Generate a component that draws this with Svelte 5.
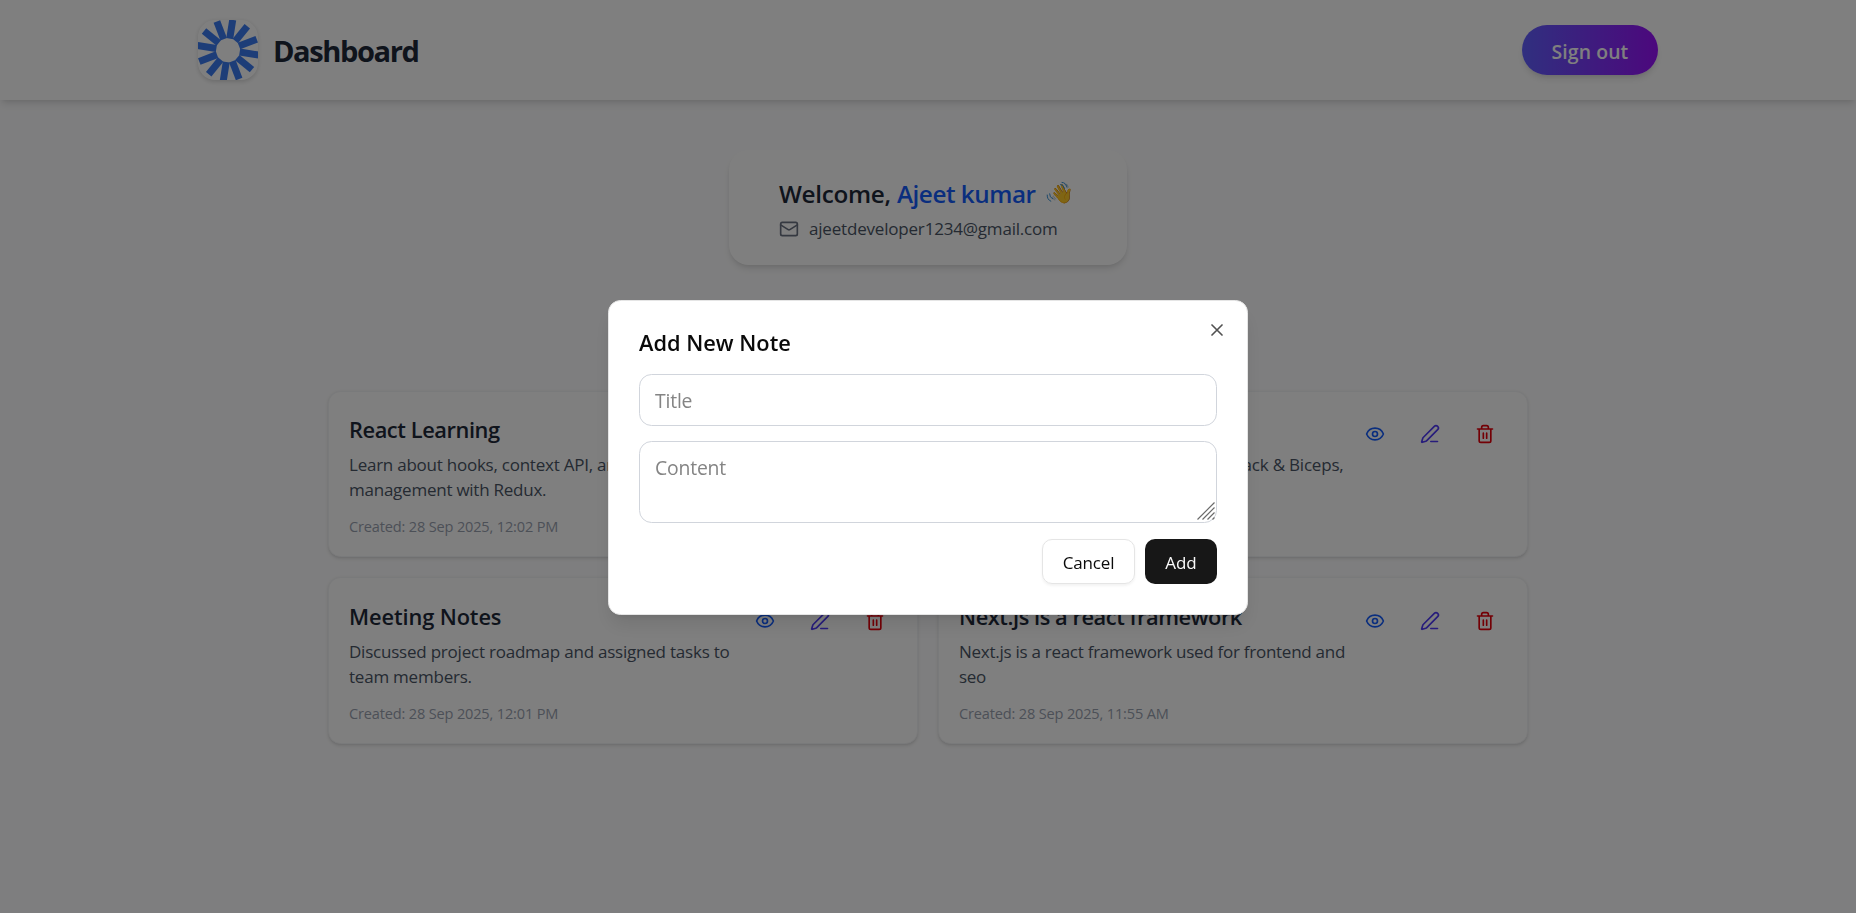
<script>
  const rays = Array.from({ length: 12 }, (_, i) => 9 + i * 30);
  const notes = [
    { title: 'React Learning', ls: -0.42, bs: -0.24, lines: ['Learn about hooks, context API, and state', 'management with Redux.'], created: '28 Sep 2025, 12:02 PM' },
    { title: 'Gym Schedule', ls: -0.33, bs: -0.2, lines: ['Monday: Chest & Triceps, Tuesday: Back & Biceps,', 'Wednesday: Legs.'], created: '28 Sep 2025, 12:01 PM' },
    { title: 'Meeting Notes', ls: -0.1, bs: -0.22, lines: ['Discussed project roadmap and assigned tasks to', 'team members.'], created: '28 Sep 2025, 12:01 PM' },
    { title: 'Next.js is a react framework', ls: -0.44, bs: -0.27, lines: ['Next.js is a react framework used for frontend and', 'seo'], created: '28 Sep 2025, 11:55 AM' }
  ];
</script>

<div class="page">
  <header>
    <div class="brand">
      <svg class="logo" viewBox="0 0 60 60" aria-hidden="true">
        <g>
          {#each rays as a}
            <rect x="26.4" y="-.5" width="7" height="19" transform="rotate({a} 30 30.3)" />
          {/each}
        </g>
      </svg>
      <h1>Dashboard</h1>
    </div>
    <button class="signout"><span>Sign out</span></button>
  </header>

  <main>
    <section class="welcome">
      <h2>
        <span class="hello">Welcome,</span><span class="name">Ajeet kumar</span><span class="wave">👋<svg viewBox="0 0 26 26" aria-hidden="true"><path d="M14.6 3.4q3 .2 4 4M16 1.4q4 .2 5 4.6M3.6 12.8q-.2 3.6 3 5M1.2 14q-.2 4.6 3.6 6.2" /></svg></span>
      </h2>
      <p>
        <svg class="icon mail" viewBox="0 0 24 24"><path d="m22 7-8.99 5.73a2 2 0 0 1-2.02 0L2 7" /><rect x="2" y="4" width="20" height="16" rx="2" /></svg>
        <span>ajeetdeveloper1234@gmail.com</span>
      </p>
    </section>

    <section class="grid">
      {#each notes as note}
        <article>
          <div class="text">
            <h3 style="letter-spacing:{note.ls}px">{note.title}</h3>
            <div class="body" style="letter-spacing:{note.bs}px">
              {#each note.lines as line}<div>{line}</div>{/each}
            </div>
            <small>Created: {note.created}</small>
          </div>
          <div class="actions">
            <button class="view" aria-label="View">
              <svg class="icon" viewBox="0 0 24 24"><path d="M2.062 12.348a1 1 0 0 1 0-.696 10.75 10.75 0 0 1 19.876 0 1 1 0 0 1 0 .696 10.75 10.75 0 0 1-19.876 0" /><circle cx="12" cy="12" r="3" /></svg>
            </button>
            <button class="edit" aria-label="Edit">
              <svg class="icon" viewBox="0 0 24 24"><path d="M13 21h8" /><path d="M21.174 6.812a1 1 0 0 0-3.986-3.987L3.842 16.174a2 2 0 0 0-.5.83l-1.321 4.352a.5.5 0 0 0 .623.622l4.353-1.32a2 2 0 0 0 .83-.497z" /></svg>
            </button>
            <button class="delete" aria-label="Delete">
              <svg class="icon" viewBox="0 0 24 24"><path d="M10 11v6M14 11v6M19 6v14a2 2 0 0 1-2 2H7a2 2 0 0 1-2-2V6M3 6h18M8 6V4a2 2 0 0 1 2-2h4a2 2 0 0 1 2 2v2" /></svg>
            </button>
          </div>
        </article>
      {/each}
    </section>
  </main>
</div>

<div class="overlay">
  <div class="dialog" role="dialog" aria-label="Add New Note">
    <button class="close" aria-label="Close">
      <svg class="icon" viewBox="0 0 24 24"><path d="M18 6 6 18M6 6l12 12" /></svg>
    </button>
    <h2 class="dtitle">Add New Note</h2>
    <input placeholder="Title" />
    <div class="area">
      <textarea placeholder="Content"></textarea>
      <svg class="grip" viewBox="0 0 18 18" aria-hidden="true"><path d="M.5 17.5l17-17M5.5 17.5l12-12M10.5 17.5l7-7M15.5 17.5l2-2" /></svg>
    </div>
    <div class="foot">
      <button class="cancel">Cancel</button>
      <button class="add">Add</button>
    </div>
  </div>
</div>

<style>
  :global(body) { margin: 0; overflow: hidden; }
  :global(#app) { font-family: 'Open Sans', 'Noto Sans', sans-serif; }
  * { box-sizing: border-box; }
  h1, h2, h3, p { margin: 0; }
  button, input, textarea { font-family: inherit; border: 0; background: none; padding: 0; margin: 0; outline: none; }
  .icon { width: 20px; height: 20px; flex: none; display: block; fill: none; stroke: currentColor; stroke-width: 2; stroke-linecap: round; stroke-linejoin: round; }

  .page { height: 913px; background: #fdfdfe; overflow: hidden; }
  header {
    height: 100px; padding: 0 198px; display: flex; align-items: center; justify-content: space-between;
    background: #fff; position: relative; box-shadow: 0 5px 7.5px -1px rgb(0 0 0 / 0.1), 0 2.5px 5px -2.5px rgb(0 0 0 / 0.1);
  }
  .brand { display: flex; align-items: center; gap: 15px; }
  .logo { width: 60px; height: 60px; border-radius: 17px; background: #fff; box-shadow: 0 1.5px 4px rgb(0 0 0 / 0.15); fill: #3b7bf0; overflow: hidden; }
  .logo g { filter: blur(0.5px); }
  h1 { font-size: 29.1px; line-height: 40px; font-weight: 700; letter-spacing: -1.42px; color: #1e2939; padding-top: 2px; }
  .signout {
    width: 136px; height: 50px; border-radius: 25px; color: #fff; font-size: 19.4px; font-weight: 600; letter-spacing: 0.1px;
    line-height: 25px; padding-top: 3px; background: linear-gradient(90deg, #615fff, #9810fa);
    box-shadow: 0 5px 7.5px -1px rgb(0 0 0 / 0.1), 0 2.5px 5px -2.5px rgb(0 0 0 / 0.1);
  }

  main { padding: 50px 328px 0; }
  .welcome {
    width: 398px; height: 115px; margin: 0 auto 125.8px; padding: 26px 50px 24px; border-radius: 20px; background: #fff;
    box-shadow: 0 5px 7.5px -1px rgb(0 0 0 / 0.1), 0 2.5px 5px -2.5px rgb(0 0 0 / 0.1);
  }
  .welcome h2 { display: flex; align-items: center; height: 35px; font-size: 24.25px; line-height: 35px; font-weight: 600; color: #1e2939; white-space: nowrap; }
  .hello { width: 118px; letter-spacing: -0.3px; }
  .name { width: 149px; letter-spacing: -0.46px; color: #155dfc; }
  .wave { position: relative; width: 26px; padding-left: 4px; font-size: 19px; letter-spacing: 0; }
  .wave svg { position: absolute; left: 0; top: 5px; width: 26px; height: 26px; fill: none; stroke: #3a93d8; stroke-width: 1; stroke-linecap: round; }
  .welcome p { display: flex; align-items: center; gap: 10px; margin-top: 5px; font-size: 17px; line-height: 25px; letter-spacing: -0.19px; color: #4a5565; }
  .mail { color: #6a7282; }

  .grid { display: grid; grid-template-columns: 1fr 1fr; gap: 20px; }
  article {
    height: 166.5px; padding: 20px; border: 1px solid #f3f4f6; border-radius: 12.5px; background: #fff; display: flex; justify-content: space-between;
    box-shadow: 0 1.25px 3.75px rgb(0 0 0 / 0.1), 0 1.25px 2.5px -1.25px rgb(0 0 0 / 0.1);
  }
  .text { white-space: nowrap; padding-top: 0.35px; }
  h3 { font-size: 21.8px; line-height: 35px; font-weight: 600; color: #1e2939; }
  .body { margin-top: 5px; font-size: 17px; line-height: 25px; color: #4a5565; }
  small { display: block; margin-top: 14px; font-size: 14.55px; line-height: 20px; letter-spacing: -0.16px; color: #99a1af; }
  .actions { display: flex; gap: 10px; }
  .actions button { width: 45px; height: 45px; display: flex; align-items: center; justify-content: center; }
  .view { color: #155dfc; }
  .edit { color: #4f39f6; }
  .delete { color: #e7000b; }

  .overlay { position: fixed; inset: 0; display: flex; justify-content: center; align-items: flex-start; padding-top: 300px; background: rgb(0 0 0 / 0.5); }
  .dialog {
    position: relative; width: 640px; height: 315px; padding: 30px; background: #fff; border: 1px solid #e5e5e5; border-radius: 12.5px;
    display: flex; flex-direction: column;
    box-shadow: 0 12.5px 18.75px -3.75px rgb(0 0 0 / 0.1), 0 5px 7.5px -5px rgb(0 0 0 / 0.1);
  }
  .close { position: absolute; right: 20px; top: 19.3px; color: #0a0a0a; opacity: 0.7; }
  .dtitle { font-size: 21.8px; line-height: 23px; font-weight: 600; color: #0a0a0a; }
  input, textarea {
    display: block; width: 100%; border: 1px solid #d1d5dc; border-radius: 12.5px; padding: 0 15px; font-size: 19.4px; line-height: 30px; color: #0a0a0a;
  }
  input { height: 52px; margin-top: 20px; padding-top: 1px; letter-spacing: -0.2px; }
  input::placeholder, textarea::placeholder { color: #848484; opacity: 1; }
  .area { position: relative; margin-top: 15px; height: 82px; }
  textarea { height: 82px; padding-top: 11px; resize: none; letter-spacing: -0.2px; }
  .grip { position: absolute; right: 2px; bottom: 3px; width: 18px; height: 18px; fill: none; stroke: #6b6b6b; stroke-width: 1.2; }
  .foot { display: flex; justify-content: flex-end; gap: 10px; margin-top: 16px; }
  .foot button { height: 45px; border-radius: 10px; font-size: 17px; line-height: 25px; padding-top: 1px; }
  .cancel { width: 93px; border: 1px solid #e5e5e5; color: #0a0a0a; box-shadow: 0 1.25px 2.5px rgb(0 0 0 / 0.05); letter-spacing: -0.15px; }
  .add { width: 72px; background: #171717; color: #fafafa; }
</style>
